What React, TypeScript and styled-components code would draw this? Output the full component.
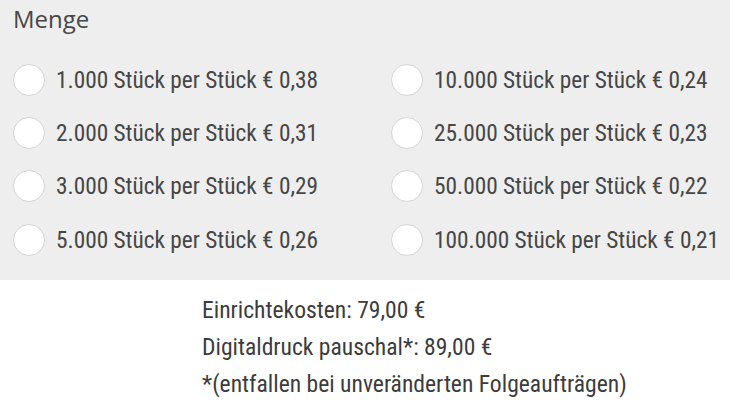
import React from "react";
import styled, { createGlobalStyle } from "styled-components";

const Global = createGlobalStyle`
  html, body { margin: 0; padding: 0; background: #ffffff; }
  body { font-family: "Roboto Condensed", "Liberation Sans Narrow", sans-serif; }
`;

const Panel = styled.section`
  background: #eeeeee;
  height: 280px;
  box-sizing: border-box;
  padding: 3px 0 0 13px;
`;

const Title = styled.h2`
  margin: 0;
  font-family: "Open Sans", "Noto Sans", sans-serif;
  font-size: 24px;
  font-weight: 400;
  color: #474747;
  line-height: 32px;
`;

const Grid = styled.div`
  display: grid;
  grid-template-columns: 378px 1fr;
  grid-auto-flow: column;
  grid-template-rows: repeat(4, 53.4px);
  margin-top: 18px;
`;

const Option = styled.label`
  display: flex;
  align-items: center;
  gap: 11px;
  color: #464646;
  font-size: 23.3px;
  cursor: pointer;
`;

const Radio = styled.span`
  width: 30px;
  height: 30px;
  border-radius: 50%;
  background: #ffffff;
  border: 1px solid #d4d4d4;
  flex: none;
`;

const Footer = styled.div`
  padding: 12px 0 0 202px;
  color: #3c3c3c;
  font-size: 23.6px;
  line-height: 37px;
`;

const options = [
  ["1.000", "0,38"],
  ["2.000", "0,31"],
  ["3.000", "0,29"],
  ["5.000", "0,26"],
  ["10.000", "0,24"],
  ["25.000", "0,23"],
  ["50.000", "0,22"],
  ["100.000", "0,21"],
];

export default function App() {
  return (
    <>
      <Global />
      <Panel>
        <Title>Menge</Title>
        <Grid>
          {options.map(([q, p]) => (
            <Option key={q}>
              <Radio />
              {q} Stück per Stück € {p}
            </Option>
          ))}
        </Grid>
      </Panel>
      <Footer>
        <div>Einrichtekosten: 79,00 €</div>
        <div>Digitaldruck pauschal*: 89,00 €</div>
        <div>*(entfallen bei unveränderten Folgeaufträgen)</div>
      </Footer>
    </>
  );
}
